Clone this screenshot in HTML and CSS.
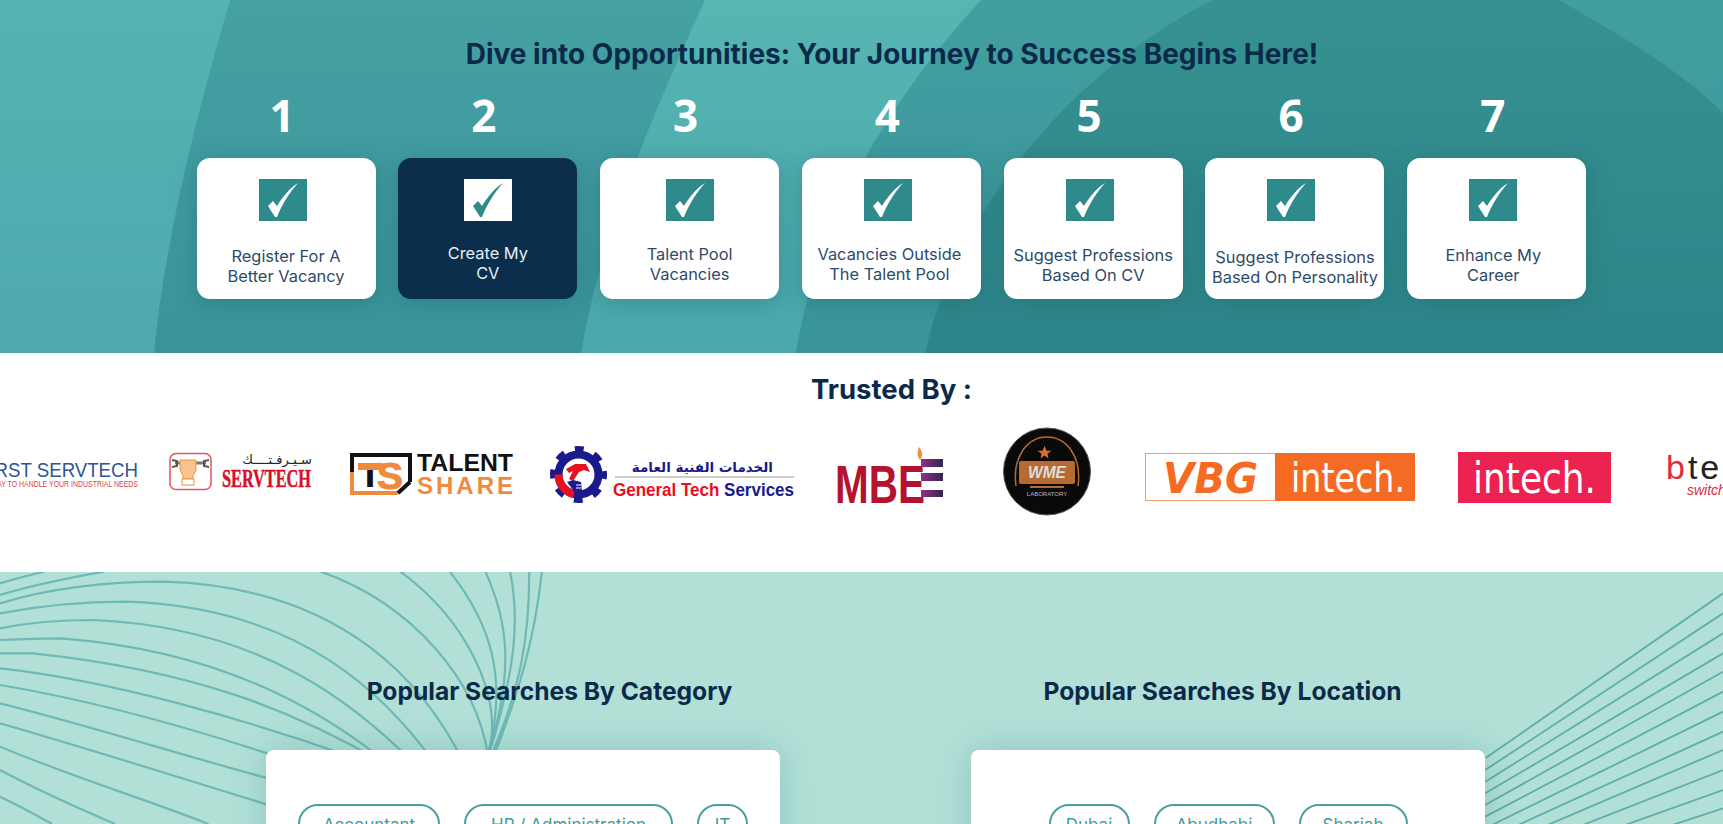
FILE: index.html
```html
<!DOCTYPE html>
<html>
    <head>
        <title>Job Portal</title>
        <link rel="stylesheet" href="styles.css">
    </head>
    <body>
        <section class="hero">
            <svg class="hero-bg" viewBox="0 0 1723 353" preserveAspectRatio="none">
                <defs>
                    <linearGradient id="g1" x1="0" y1="0" x2="0" y2="1"><stop offset="0" stop-color="#55b4b2"/><stop offset="1" stop-color="#4ea9af"/></linearGradient>
                    <linearGradient id="g2" x1="0" y1="0" x2="0" y2="1"><stop offset="0" stop-color="#46a1a2"/><stop offset="1" stop-color="#39939b"/></linearGradient>
                    <linearGradient id="g3" x1="0" y1="0" x2="0" y2="1"><stop offset="0" stop-color="#57b5b2"/><stop offset="1" stop-color="#49a8ac"/></linearGradient>
                    <linearGradient id="g4" x1="0" y1="0" x2="0" y2="1"><stop offset="0" stop-color="#429f9f"/><stop offset="1" stop-color="#3a949b"/></linearGradient>
                    <linearGradient id="g5" x1="0" y1="0" x2="0" y2="1"><stop offset="0" stop-color="#369190"/><stop offset="1" stop-color="#2d8489"/></linearGradient>
                </defs>
                <rect width="1723" height="353" fill="url(#g1)"/>
                <path d="M230 0C195 120 165 240 154 353H1723V0Z" fill="url(#g2)"/>
                <path d="M705 0C650 120 600 240 581 353H1723V0Z" fill="url(#g3)"/>
                <path d="M981 0C880 110 815 230 796 353H1723V0Z" fill="url(#g4)"/>
                <path d="M925 353C950 240 1040 90 1212 0H1559C1620 35 1680 70 1723 113V353Z" fill="url(#g5)"/>
            </svg>
            <div class="hero-inner">
                <h1 class="hero-title">Dive into Opportunities: Your Journey to Success Begins Here!</h1>
                <div class="steps">
                    <div class="step">
                        <div class="step-num">1</div>
                        <div class="step-card">
                            <svg class="check check-left" viewBox="0 0 48 42"><rect width="48" height="42"/><path d="M9 27L14 22L18 27C24 17 31 9 39 4C31 13 23 25 18 38H16Z"/></svg>
                            <p class="step-text gap-26">Register For A<br>Better Vacancy</p>
                        </div>
                    </div>
                    <div class="step">
                        <div class="step-num">2</div>
                        <div class="step-card active">
                            <svg class="check" viewBox="0 0 48 42"><rect width="48" height="42"/><path d="M9 27L14 22L18 27C24 17 31 9 39 4C31 13 23 25 18 38H16Z"/></svg>
                            <p class="step-text gap-23">Create My<br>CV</p>
                        </div>
                    </div>
                    <div class="step">
                        <div class="step-num">3</div>
                        <div class="step-card">
                            <svg class="check" viewBox="0 0 48 42"><rect width="48" height="42"/><path d="M9 27L14 22L18 27C24 17 31 9 39 4C31 13 23 25 18 38H16Z"/></svg>
                            <p class="step-text gap-23 tall">Talent Pool<br>Vacancies</p>
                        </div>
                    </div>
                    <div class="step">
                        <div class="step-num">4</div>
                        <div class="step-card">
                            <svg class="check check-left" viewBox="0 0 48 42"><rect width="48" height="42"/><path d="M9 27L14 22L18 27C24 17 31 9 39 4C31 13 23 25 18 38H16Z"/></svg>
                            <p class="step-text gap-23 tall text-left-small">Vacancies Outside<br>The Talent Pool</p>
                        </div>
                    </div>
                    <div class="step">
                        <div class="step-num">5</div>
                        <div class="step-card">
                            <svg class="check check-left" viewBox="0 0 48 42"><rect width="48" height="42"/><path d="M9 27L14 22L18 27C24 17 31 9 39 4C31 13 23 25 18 38H16Z"/></svg>
                            <p class="step-text gap-25">Suggest Professions<br>Based On CV</p>
                        </div>
                    </div>
                    <div class="step">
                        <div class="step-num">6</div>
                        <div class="step-card">
                            <svg class="check check-left" viewBox="0 0 48 42"><rect width="48" height="42"/><path d="M9 27L14 22L18 27C24 17 31 9 39 4C31 13 23 25 18 38H16Z"/></svg>
                            <p class="step-text gap-27">Suggest Professions<br>Based On Personality</p>
                        </div>
                    </div>
                    <div class="step">
                        <div class="step-num">7</div>
                        <div class="step-card">
                            <svg class="check check-left" viewBox="0 0 48 42"><rect width="48" height="42"/><path d="M9 27L14 22L18 27C24 17 31 9 39 4C31 13 23 25 18 38H16Z"/></svg>
                            <p class="step-text gap-25 text-left">Enhance My<br>Career</p>
                        </div>
                    </div>
                </div>
            </div>
        </section>

        <section class="trusted">
            <h2 class="trusted-title">Trusted By :</h2>
            <div class="logos">
                <svg class="logo w155" viewBox="0 0 155 100">
                    <text x="-22" y="57" class="sans" font-size="21" fill="#2f5597" textLength="160" lengthAdjust="spacingAndGlyphs">FIRST SERVTECH</text>
                    <text x="-25" y="67" class="sans" font-size="8.4" fill="#d9434e" textLength="163" lengthAdjust="spacingAndGlyphs">THE WAY TO HANDLE YOUR INDUSTRIAL NEEDS</text>
                </svg>
                <svg class="logo w180" viewBox="155 0 180 100">
                    <rect x="170" y="33.500" width="41" height="36" rx="6" fill="#fff" stroke="#e0555f" stroke-width="1.5"/>
                    <path d="M175 43H206" stroke="#777" stroke-width="3"/>
                    <path d="M172 40L177 41V46L172 47M209 40L204 41V46L209 47" fill="none" stroke="#555" stroke-width="2"/>
                    <path d="M180 40H196V50L193 56V59H183V56L180 50Z" fill="#f6c48e" stroke="#e8953f"/>
                    <rect x="182" y="59" width="12" height="6" fill="#fff" stroke="#e8953f"/>
                    <text x="312" y="44" text-anchor="end" class="arabic" font-size="13" fill="#222">سـيـرفـتــــك</text>
                    <text x="222" y="67" class="serif" font-size="26" font-weight="700" fill="#d8112a" stroke="#d8112a" stroke-width="0.5" textLength="89" lengthAdjust="spacingAndGlyphs">SERVTECH</text>
                </svg>
                <svg class="logo w205" viewBox="335 0 205 100">
                    <path d="M352 56V35H410V62" fill="none" stroke="#111" stroke-width="4"/>
                    <path d="M352 52V73H398" fill="none" stroke="#f08a3c" stroke-width="4"/>
                    <path d="M398 73L410 62" stroke="#111" stroke-width="4"/>
                    <text x="358" y="67" class="sans" font-size="33" font-weight="700" fill="#111" textLength="24" lengthAdjust="spacingAndGlyphs">T</text>
                    <rect x="358" y="43" width="25" height="7" fill="#f08a3c"/>
                    <text x="377" y="69" class="sans" font-size="36" font-weight="700" fill="#f08a3c" stroke="#f08a3c" textLength="26" lengthAdjust="spacingAndGlyphs">S</text>
                    <text x="417" y="51" class="sans" font-size="24" font-weight="700" fill="#111" textLength="96" lengthAdjust="spacingAndGlyphs">TALENT</text>
                    <text x="417" y="74" class="sans" font-size="24" font-weight="700" fill="#f08a3c" textLength="96">SHARE</text>
                </svg>
                <svg class="logo w280" viewBox="540 0 280 100">
                    <circle cx="578.500" cy="54.500" r="25.500" fill="none" stroke="#1a1a8c" stroke-width="6" stroke-dasharray="9 11.030" stroke-dashoffset="4.500"/>
                    <circle cx="578.500" cy="54.500" r="20" fill="none" stroke="#1a1a8c" stroke-width="8"/>
                    <path d="M574 74A20 20 0 0 1 558.500 54.500" fill="none" stroke="#e8101f" stroke-width="8"/>
                    <path d="M566 49L575 44H586L590 52L584 50L579 52L573 61L569 59L573 51L569 53Z" fill="#e8101f"/>
                    <path d="M567 62L573 60L581 62L582 72L576 74Z" fill="#1a1a8c"/>
                    <path d="M576 65H581M576 68H581" stroke="#fff"/>
                    <text x="773" y="52" text-anchor="end" class="arabic" font-size="13.500" font-weight="700" fill="#1a1a8c">الخدمات الفنية العامة</text>
                    <path d="M615 57H794" stroke="#999"/>
                    <text x="613" y="76" class="sans" font-size="18" font-weight="700" fill="#e8101f" textLength="181" lengthAdjust="spacingAndGlyphs">General Tech <tspan fill="#1a1a8c">Services</tspan></text>
                </svg>
                <svg class="logo w170" viewBox="820 0 170 100">
                    <defs><linearGradient id="purple"><stop offset="0" stop-color="#8e2f8c"/><stop offset="1" stop-color="#33264a"/></linearGradient></defs>
                    <text x="835" y="83" class="sans" font-size="53" font-weight="700" fill="#b5122f" textLength="90" lengthAdjust="spacingAndGlyphs">MBE</text>
                    <rect x="921" y="39" width="22" height="8" fill="url(#purple)"/>
                    <rect x="921" y="53" width="22" height="8" fill="url(#purple)"/>
                    <rect x="921" y="70" width="22" height="7" fill="url(#purple)"/>
                    <path d="M919 27C923 32 923 36 920 40C917 36 917 32 919 27Z" fill="#e8913f"/>
                </svg>
                <svg class="logo w140" viewBox="990 0 140 100">
                    <circle cx="1047" cy="51.500" r="43.500" fill="#0a0a0a" stroke="#555"/>
                    <path d="M1016 66C1012 36 1028 17 1047 17C1066 17 1082 36 1078 66" fill="none" stroke="#b86a33" stroke-width="1.500"/>
                    <rect x="1019" y="41" width="56" height="23" rx="2" fill="#b86a33"/>
                    <text x="1047" y="58" text-anchor="middle" class="sans" font-size="16" font-weight="700" font-style="italic" fill="#ddd" textLength="38" lengthAdjust="spacingAndGlyphs">WME</text>
                    <path d="M1047 28L1049 33L1054 33L1050 36L1051 41L1047 38L1043 41L1044 36L1040 33L1045 33Z" fill="#d9722e" transform="translate(8 -2) scale(.99)"/>
                    <path d="M1030 67H1064" stroke="#b86a33" stroke-width="2"/>
                    <text x="1047" y="76" text-anchor="middle" class="sans" font-size="6" fill="#bbb">LABORATORY</text>
                </svg>
                <svg class="logo w310" viewBox="1130 0 310 100">
                    <rect x="1145.500" y="33.500" width="130" height="47" fill="#fff" stroke="#f4a06c"/>
                    <rect x="1275" y="33" width="140" height="48" fill="#f56b23"/>
                    <text x="1163" y="73" class="arabic" font-size="43" font-weight="700" font-style="italic" fill="#f56b23" textLength="95" lengthAdjust="spacingAndGlyphs">VBG</text>
                    <text x="1291" y="72" class="arabic" font-size="40" fill="#fff" textLength="114" lengthAdjust="spacingAndGlyphs">intech.</text>
                </svg>
                <svg class="logo w200" viewBox="1440 0 200 100">
                    <rect x="1458" y="32" width="153" height="51" fill="#ec2350"/>
                    <text x="1473" y="73" class="arabic" font-size="42" fill="#fff" textLength="123" lengthAdjust="spacingAndGlyphs">intech.</text>
                </svg>
                <svg class="logo w100" viewBox="1640 0 100 100">
                    <text x="1666" y="59" class="sans" font-size="34" fill="#e02b3c" letter-spacing="3">b<tspan fill="#222">ten</tspan></text>
                    <text x="1687" y="75" class="sans" font-size="14" font-style="italic" fill="#e02b3c">switch</text>
                </svg>
            </div>
        </section>

        <section class="popular">
            <svg class="wave-left" viewBox="0 0 1568 762" preserveAspectRatio="none">
                <path d="M0 40C30 25 55 15 80 5M0 75C60 45 120 25 190 5"/>
                <path d="M0 100C100 50 200 35 300 35C600 50 800 300 890 760"/>
                <path d="M0 130C80 105 160 95 230 95C520 110 720 330 860 760"/>
                <path d="M0 175C60 155 120 150 170 150C450 170 660 360 850 760"/>
                <path d="M0 210C40 207 80 205 110 205C400 240 620 420 800 720"/>
                <path d="M0 250C20 250 40 250 60 250C350 300 540 420 720 600"/>
                <path d="M0 295C200 330 450 450 640 560"/>
                <path d="M0 345C200 400 400 500 560 590"/>
                <path d="M0 400C170 470 340 560 500 630"/>
                <path d="M0 460C170 540 340 630 500 710"/>
                <path d="M0 530C130 620 270 690 380 762"/>
                <path d="M0 600C80 670 150 720 210 762"/>
                <path d="M0 680C40 710 70 740 95 762"/>
                <path d="M585 5C750 100 870 330 890 560"/>
                <path d="M730 5C850 150 920 380 890 560"/>
                <path d="M820 5C890 150 930 320 888 560"/>
                <path d="M885 5C925 150 940 300 888 560"/>
                <path d="M930 5C948 150 940 300 890 560"/>
                <path d="M965 5C965 200 950 350 895 560"/>
                <path d="M988 5C975 200 950 350 900 560"/>
            </svg>
            <svg class="lines-right" viewBox="0 0 1568 762" preserveAspectRatio="none">
                <path d="M1568 70L1136 565M1568 130L1136 600M1568 190L1136 635M1568 250L1136 670M1568 305L1136 705M1568 365L1136 740M1568 425L1136 775M1568 485L1136 810M1568 540L1136 845M1568 600L1136 880M1568 660L1136 915M1568 715L1136 950"/>
            </svg>
            <div class="popular-cols">
                <div class="popular-col">
                    <h2 class="popular-title title-right">Popular Searches By Category</h2>
                    <div class="chip-card">
                        <a class="chip w142">Accountant</a>
                        <a class="chip w209">HR / Administration</a>
                        <a class="chip w51">IT</a>
                    </div>
                </div>
                <div class="popular-col">
                    <h2 class="popular-title title-left">Popular Searches By Location</h2>
                    <div class="chip-card">
                        <a class="chip w81">Dubai</a>
                        <a class="chip w121">Abudhabi</a>
                        <a class="chip w109">Sharjah</a>
                    </div>
                </div>
            </div>
        </section>
    </body>
</html>
```
FILE: styles.css
```css
html, body {
    margin: 0;
    height: 824px;
    overflow: hidden;
}

body {
    background-color: #b2e0d7;
    font-family: Inter, "Open Sans", sans-serif;
}

h1, h2, p {
    margin: 0;
}

.hero {
    position: relative;
    height: 353px;
    padding-left: 196.5px;
}

.hero-bg {
    position: absolute;
    top: 0;
    left: 0;
    width: 100%;
    height: 100%;
}

.hero-inner {
    position: relative;
    width: 1391px;
    padding-top: 36px;
}

.hero-title {
    height: 36px;
    color: #0b2a4a;
    font-size: 28px;
    font-weight: 700;
    line-height: 36px;
    text-align: center;
    white-space: nowrap;
}

.steps {
    display: grid;
    grid-template-columns: repeat(7, 179px);
    column-gap: 22.8px;
    margin-top: 13px;
}

.step-num {
    height: 60px;
    margin-bottom: 13px;
    padding-right: 8px;
    color: white;
    font-family: "Open Sans", sans-serif;
    font-size: 44px;
    font-weight: 700;
    line-height: 60px;
    text-align: center;
}

.step-card {
    display: flex;
    flex-direction: column;
    align-items: center;
    box-sizing: border-box;
    height: 141px;
    padding-top: 21px;
    border-radius: 13px;
    background: white;
    color: #2f4a68;
    box-shadow: 0 4px 22px rgba(30, 100, 105, 0.4);
}

.step-card.active {
    background: #0b2e4d;
    color: #e6edf2;
}

.check {
    flex: none;
    width: 48px;
    height: 42px;
    fill: white;
}

.check rect {
    fill: #2f8b8b;
}

.active .check rect {
    fill: white;
}

.active .check path {
    fill: #2f8b8b;
}

.check-left {
    margin-right: 7px;
}

.step-text {
    font-size: 16.4px;
    line-height: 19.5px;
    text-align: center;
    white-space: nowrap;
}

.step-text.tall {
    line-height: 20px;
}

.text-left { margin-right: 7px; }
.text-left-small { margin-right: 4px; }

.gap-23 { margin-top: 23px; }
.gap-25 { margin-top: 25px; }
.gap-26 { margin-top: 26px; }
.gap-27 { margin-top: 27px; }

.trusted {
    height: 219px;
    background: white;
    overflow: hidden;
}

.trusted-title {
    padding: 18px 0 0 60px;
    color: #0b2a4a;
    font-size: 27.5px;
    font-weight: 700;
    line-height: 36px;
    text-align: center;
}

.logos {
    display: flex;
    height: 100px;
    margin-top: 13px;
}

.logo {
    flex: none;
    height: 100px;
}

.w155 { width: 155px; }
.w180 { width: 180px; }
.w205 { width: 205px; }
.w280 { width: 280px; }
.w170 { width: 170px; }
.w140 { width: 140px; }
.w310 { width: 310px; }
.w200 { width: 200px; }
.w100 { width: 100px; }

.sans { font-family: "Liberation Sans", sans-serif; }
.serif { font-family: "Liberation Serif", serif; }
.arabic { font-family: "DejaVu Sans", sans-serif; }

.popular {
    position: relative;
    height: 252px;
    background: #b2e0d7;
    overflow: hidden;
}

.wave-left, .lines-right {
    position: absolute;
    top: -2px;
    width: 860px;
    height: 254px;
    fill: none;
}

.wave-left {
    left: 0;
    stroke: #6fb9b5;
    stroke-width: 2.2;
}

.lines-right {
    left: 860px;
    width: 863px;
    stroke: #5fadaa;
    stroke-width: 1.8;
}

.wave-left path, .lines-right path {
    vector-effect: non-scaling-stroke;
}

.popular-cols {
    position: relative;
    display: flex;
    gap: 191px;
    padding: 101px 0 0 266px;
}

.popular-col {
    width: 514px;
}

.popular-title {
    height: 36px;
    margin-bottom: 41px;
    color: #0b2a4a;
    font-size: 24.6px;
    font-weight: 700;
    line-height: 36px;
    text-align: center;
    white-space: nowrap;
}

.title-right { padding-left: 53px; }
.title-left { padding-right: 11px; }

.chip-card {
    display: flex;
    justify-content: center;
    gap: 24px;
    box-sizing: border-box;
    height: 200px;
    padding-top: 54px;
    border-radius: 8px;
    background: white;
    box-shadow: 0 0 36px rgba(47, 130, 130, 0.28);
}

.chip {
    box-sizing: border-box;
    height: 42px;
    border: 2px solid #4a9fa0;
    border-radius: 20px;
    color: #3f9a9a;
    font-size: 17px;
    line-height: 38px;
    text-align: center;
    white-space: nowrap;
}

.w142 { width: 142px; }
.w209 { width: 209px; }
.w51 { width: 51px; }
.w81 { width: 81px; }
.w121 { width: 121px; }
.w109 { width: 109px; }
```
